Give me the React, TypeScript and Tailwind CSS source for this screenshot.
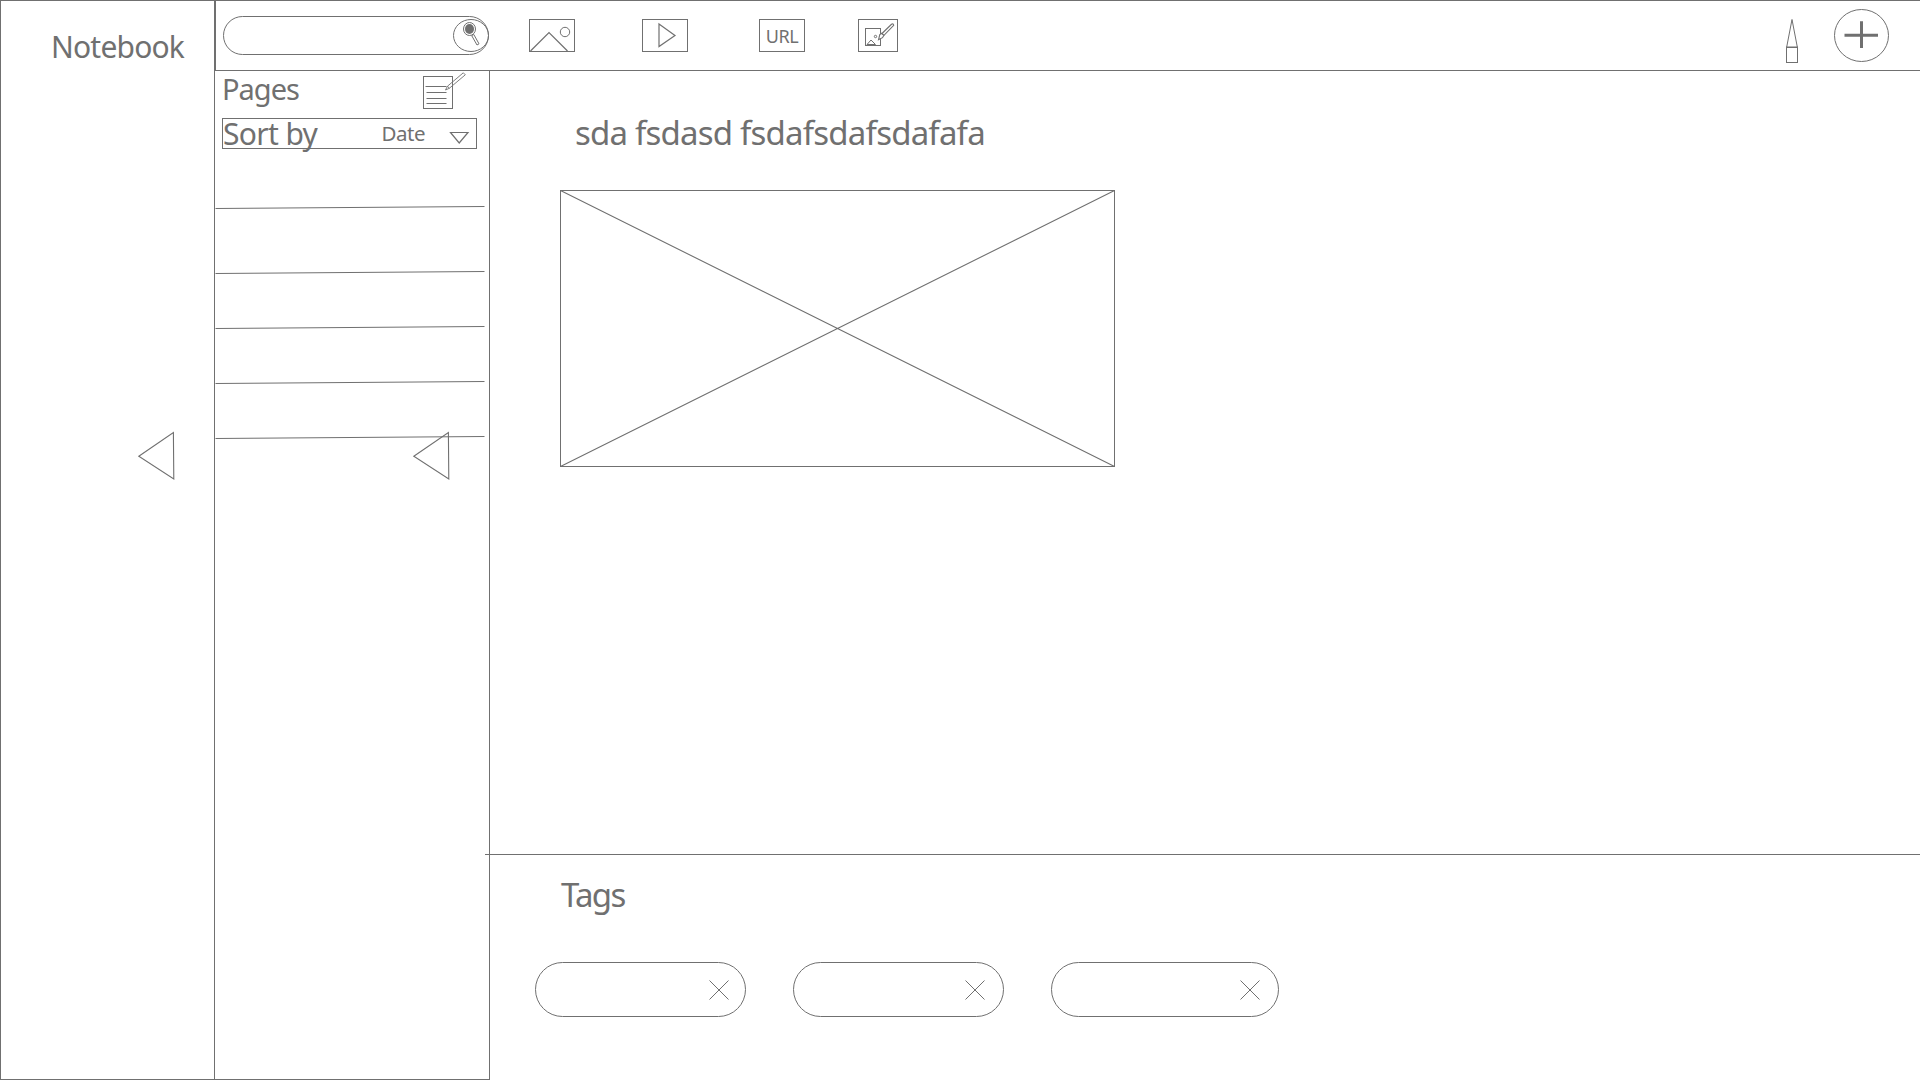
import React from "react";

const stroke = "#707070";

function Icon({ w, h, className = "", children }: { w: number; h: number; className?: string; children: React.ReactNode }) {
  return (
    <svg
      width={w}
      height={h}
      viewBox={`0 0 ${w} ${h}`}
      fill="none"
      stroke={stroke}
      strokeWidth={1}
      className={`block shrink-0 overflow-visible ${className}`}
    >
      {children}
    </svg>
  );
}

function CollapseArrow() {
  return (
    <Icon w={37} h={49}>
      <path d="M1.8 24.3 L36.4 0.5 L36.8 47 Z" strokeWidth="1.1" />
    </Icon>
  );
}

function Tag({ className }: { className: string }) {
  return (
    <div className={`flex h-[55px] items-center justify-end rounded-full border border-[#707070] ${className}`}>
      <Icon w={20} h={20}>
        <path d="M0.5 0.5 L19.5 19.5 M19.5 0.5 L0.5 19.5" />
      </Icon>
    </div>
  );
}

function TopBar() {
  return (
    <header className="flex h-[71px] border border-r-0 border-[#707070] pl-[7px]">
      <div className="mt-[15px] flex h-[39px] w-[266px] justify-end rounded-full border border-[#707070]">
        <Icon w={36} h={33} className="mt-[2px] -mr-px">
          <ellipse cx="18" cy="16.5" rx="17.5" ry="16" />
          <ellipse cx="16.5" cy="10" rx="6" ry="6.5" />
          <ellipse cx="16.5" cy="10" rx="4.5" ry="5" fill={stroke} stroke="none" />
          <path d="M18.7 16.6 L20.8 15.5 L26 24.8 L24 26 Z" />
        </Icon>
      </div>
      <Icon w={46} h={33} className="mt-[18px] ml-[40px]">
        <rect x="0.5" y="0.5" width="45" height="32" />
        <path d="M1.5 32 L20 13.5 L38.5 32" strokeWidth="1.2" />
        <circle cx="36" cy="13" r="4.7" />
      </Icon>
      <Icon w={46} h={33} className="mt-[18px] ml-[67px]">
        <rect x="0.5" y="0.5" width="45" height="32" />
        <path d="M17 5 L33 16.5 L17 27.5 Z" strokeWidth="1.2" />
      </Icon>
      <div className="mt-[18px] ml-[71px] flex h-[33px] w-[46px] items-center justify-center border border-[#707070] text-[18px] leading-none">
        <span className="tracking-[-0.4px]">URL</span>
      </div>
      <Icon w={40} h={33} className="mt-[18px] ml-[53px]">
        <rect x="0.5" y="0.5" width="39" height="32" />
        <rect x="7.5" y="9.5" width="15" height="17" />
        <path d="M9 25.5 L13 21 L17.5 25.5 Z" />
        <circle cx="17.5" cy="17.5" r="1.2" />
        <path d="M20.5 20.8 L21.8 15.6 L23.8 14.3 L25.8 16.5 L24.5 18.7 Z" fill="white" strokeWidth="1.1" />
        <path d="M24 14.5 L33.5 5.3 Q35.5 4.2 35.7 6.3 L26 16.3 Z" fill="white" strokeWidth="1.1" />
      </Icon>
      <Icon w={12} h={46} className="mt-[17px] mr-[36px] ml-auto">
        <path d="M0.7 29 L6 1.5 L11.3 29" />
        <rect x="0.5" y="29.5" width="11" height="15" />
        <path d="M0 29 H12" />
      </Icon>
      <Icon w={55} h={53} className="mt-[8px] mr-[31px]">
        <ellipse cx="27.5" cy="26.5" rx="27" ry="26" />
        <path d="M10.5 26.3 H44 M27.5 12.3 V39" strokeWidth="3" />
      </Icon>
    </header>
  );
}

const rowHeights = ["h-[65px]", "h-[55px]", "h-[55px]", "h-[55px]", "h-[3px]"];

function PagesPanel() {
  return (
    <aside className="relative w-[275px] shrink-0 border-r border-b border-[#707070]">
      <div className="flex h-[47px] justify-between pr-[24px] pl-[7px]">
        <h2 className="mt-[-2px] text-[29px] leading-[40px] tracking-[-1px]">Pages</h2>
        <Icon w={42} h={38} className="mt-[1px]">
          <rect x="0.5" y="4.5" width="29" height="32" />
          <path d="M2.5 14.5 H23.5 M3.5 20.5 H23.5 M3.5 26.5 H23.5 M3.5 31.5 H23.5" />
          <path d="M22.5 18 L24.5 14.2 L40.3 0.8 L42.3 2.8 L26.3 16.3 Z M24.5 14.2 L26.3 16.3" strokeWidth="0.9" />
        </Icon>
      </div>
      <div className="ml-[7px] flex h-[31px] w-[255px] items-center border border-[#707070]">
        <span className="text-[30px] leading-[30px] tracking-[-0.65px]">Sort by</span>
        <span className="mb-[2px] ml-auto text-[20.5px] leading-[30px] tracking-[-0.5px]">Date</span>
        <Icon w={19} h={12} className="mt-[9px] mr-[7px] ml-[25px]">
          <path d="M0.5 0.5 H18 L9.2 11 Z" strokeWidth="1.2" />
        </Icon>
      </div>
      <ul className="mt-[57px]">
        {rowHeights.map((h, i) => (
          <li key={i} className={h}>
            <Icon w={270} h={3}>
              <path d="M0.5 2.5 L269.5 0.5" />
            </Icon>
          </li>
        ))}
      </ul>
      <div className="absolute top-[361px] left-[197px]">
        <CollapseArrow />
      </div>
    </aside>
  );
}

export default function App() {
  return (
    <div className="flex h-[1080px] w-[1920px] overflow-hidden bg-white font-['Noto_Sans',sans-serif] text-[#707070]">
      <nav className="flex w-[215px] shrink-0 flex-col border border-[#707070]">
        <h1 className="mt-[26px] ml-[50px] text-[30px] leading-[40px] tracking-[-0.8px]">Notebook</h1>
        <div className="mt-[365px] ml-[136px]">
          <CollapseArrow />
        </div>
      </nav>
      <div className="flex min-w-0 flex-1 flex-col">
        <TopBar />
        <div className="flex flex-1">
          <PagesPanel />
          <main className="flex flex-1 flex-col">
            <section className="h-[783px] pl-[70px]">
              <p className="mt-[39px] ml-[15px] text-[33px] leading-[46px] tracking-[-0.8px] whitespace-nowrap">
                sda fsdasd fsdafsdafsdafafa
              </p>
              <Icon w={555} h={277} className="mt-[34px]">
                <rect x="0.5" y="0.5" width="554" height="276" />
                <path d="M0.5 0.5 L554.5 276.5 M554.5 0.5 L0.5 276.5" strokeWidth="1.1" />
              </Icon>
            </section>
            <section className="-ml-[5px] border-t border-[#707070] pl-[50px]">
              <h2 className="mt-[17px] ml-[26px] text-[33px] leading-[46px] tracking-[-1.7px]">Tags</h2>
              <div className="mt-[44px] flex">
                <Tag className="w-[211px] pr-[16px]" />
                <Tag className="ml-[47px] w-[211px] pr-[18px]" />
                <Tag className="ml-[47px] w-[228px] pr-[18px]" />
              </div>
            </section>
          </main>
        </div>
      </div>
    </div>
  );
}
